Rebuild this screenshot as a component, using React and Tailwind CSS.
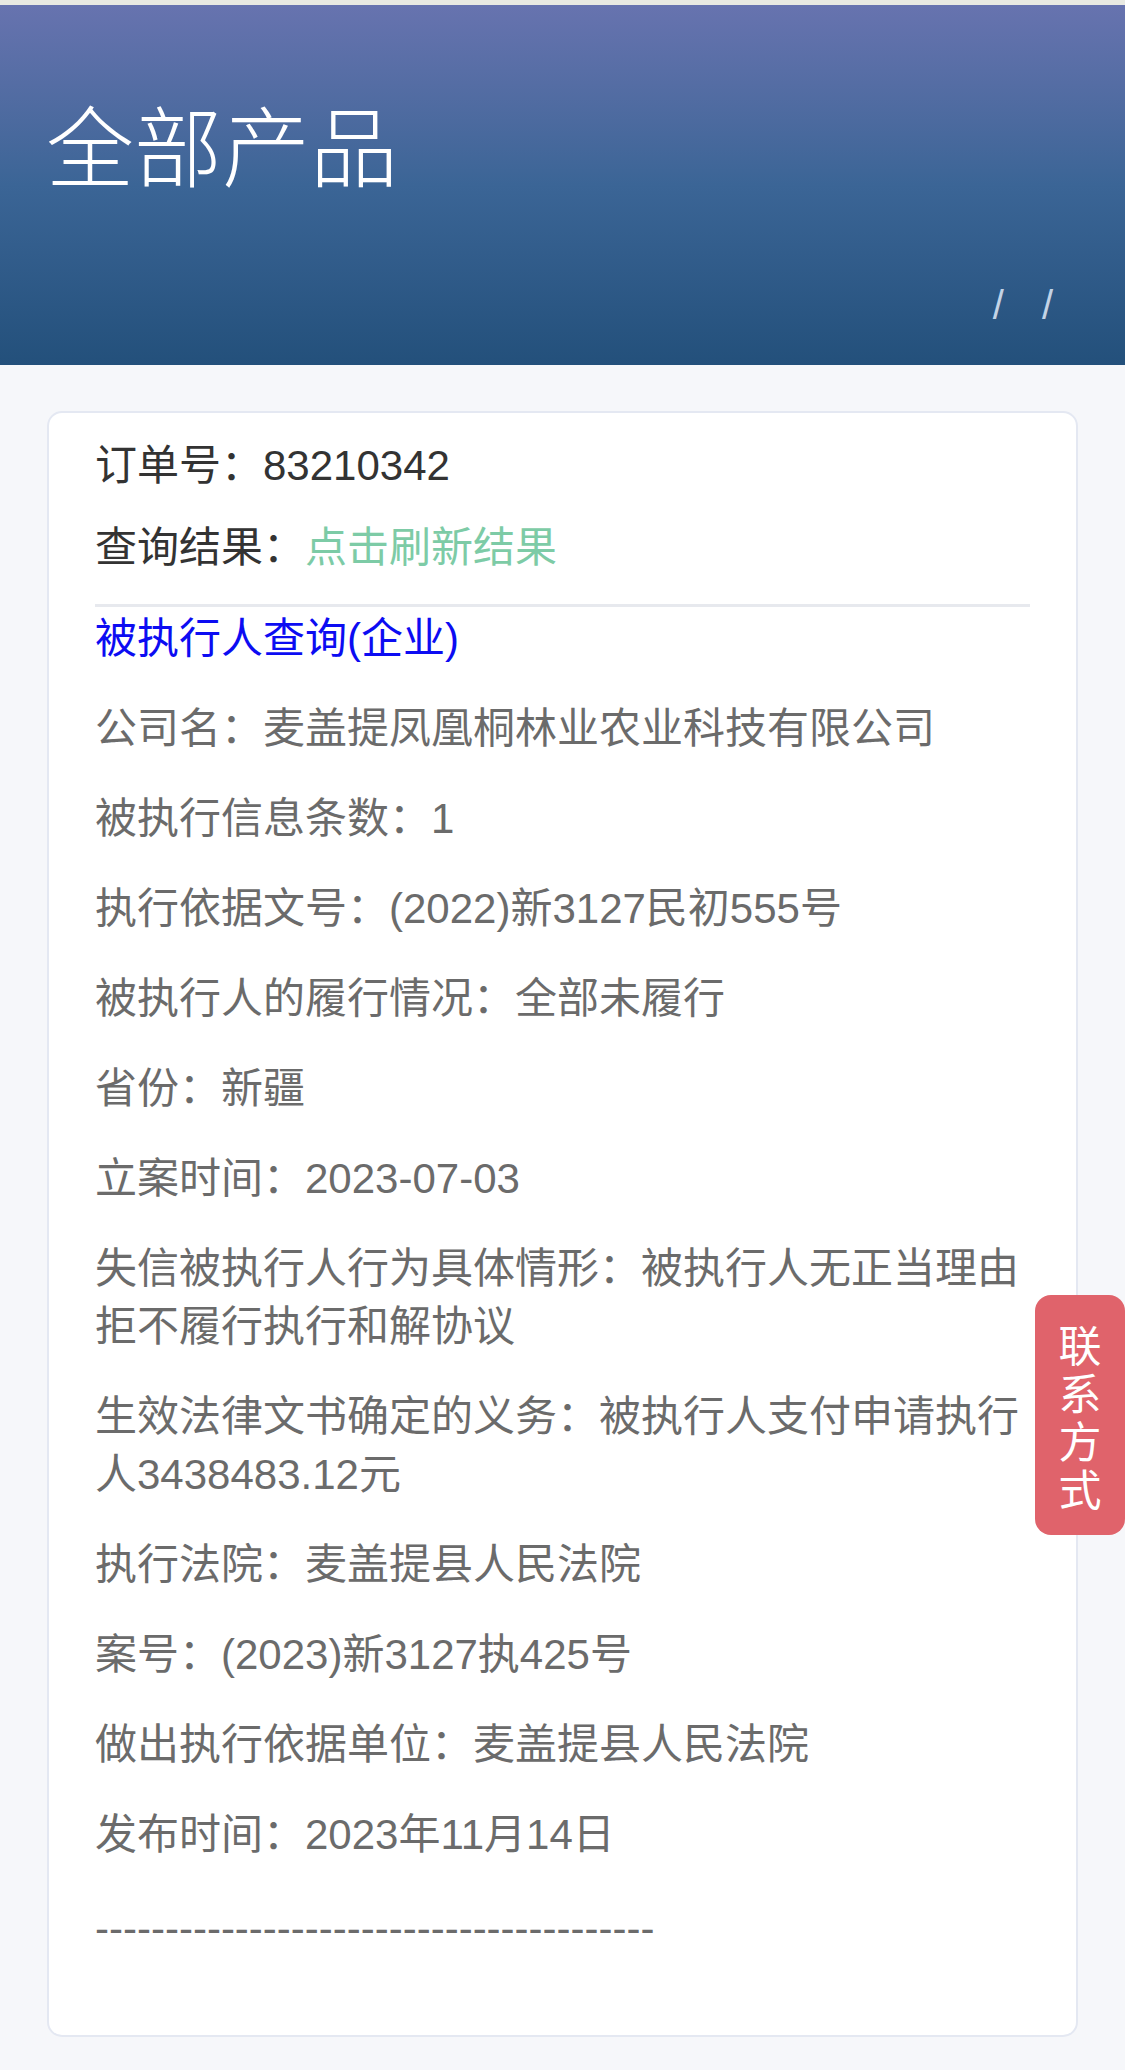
const items = [
  { label: '公司名：', value: '麦盖提凤凰桐林业农业科技有限公司' },
  { label: '被执行信息条数：', value: '1' },
  { label: '执行依据文号：', value: '(2022)新3127民初555号' },
  { label: '被执行人的履行情况：', value: '全部未履行' },
  { label: '省份：', value: '新疆' },
  { label: '立案时间：', value: '2023-07-03' },
  { label: '失信被执行人行为具体情形：', value: '被执行人无正当理由拒不履行执行和解协议' },
  { label: '生效法律文书确定的义务：', value: '被执行人支付申请执行人3438483.12元' },
  { label: '执行法院：', value: '麦盖提县人民法院' },
  { label: '案号：', value: '(2023)新3127执425号' },
  { label: '做出执行依据单位：', value: '麦盖提县人民法院' },
  { label: '发布时间：', value: '2023年11月14日' },
];

export default function App() {
  return (
    <div
      className="relative min-h-[2070px] w-[1125px] bg-[#f6f7fa]"
      style={{ fontFamily: '"Liberation Sans", "Noto Sans CJK SC", sans-serif' }}
    >
      {/* top strip */}
      <div className="h-[5px] bg-[#e8e9e2]" />

      {/* Header banner */}
      <header className="h-[360px] bg-gradient-to-b from-[#6773af] via-[#3b6596] to-[#23507b] flex flex-col pl-[46px] pr-[72px]">
        <h1 className="mt-[84px] text-[88px] leading-[1.2] text-white font-light" style={{ fontFamily: '"Noto Sans CJK SC", sans-serif' }}>
          全部产品
        </h1>
        <div className="mt-auto mb-[40px] flex justify-end gap-[38px] text-[40px] leading-none text-[#c3d3e6] font-light">
          <span>/</span>
          <span>/</span>
        </div>
      </header>

      {/* Card */}
      <div className="pt-[46px] px-[47px] pb-[36px]">
        <div className="rounded-[15px] border-2 border-[#e4e8f2] bg-white pt-[24px] px-[46px] pb-[77px]">
          <div className="text-[42px] leading-[58px] text-[#333333]">订单号：83210342</div>
          <div className="mt-[24px] text-[42px] leading-[58px] text-[#333333]">
            查询结果：<span className="text-[#7dcba6]">点击刷新结果</span>
          </div>
          <div className="mt-[27px] h-[3px] bg-[#e7e9ee]" />
          <div className="mt-[3px] text-[42px] leading-[58px] text-[#0c0cf2]">被执行人查询(企业)</div>
          <div className="mt-[32px] flex flex-col gap-[32px] text-[42px] leading-[58px] text-[#6b6b6b]">
            {items.map((it) => (
              <div key={it.label}>
                {it.label}
                {it.value}
              </div>
            ))}
            <div className="pt-[4px]">----------------------------------------</div>
          </div>
        </div>
      </div>

      {/* Contact button */}
      <div
        className="absolute left-[1035px] top-[1295px] w-[90px] h-[240px] rounded-[16px] bg-[#e0636b] flex flex-col items-center justify-center text-white text-[43px] leading-[48px]"
        style={{ fontFamily: '"Noto Sans CJK SC", sans-serif' }}
      >
        <span>联</span>
        <span>系</span>
        <span>方</span>
        <span>式</span>
      </div>
    </div>
  );
}
